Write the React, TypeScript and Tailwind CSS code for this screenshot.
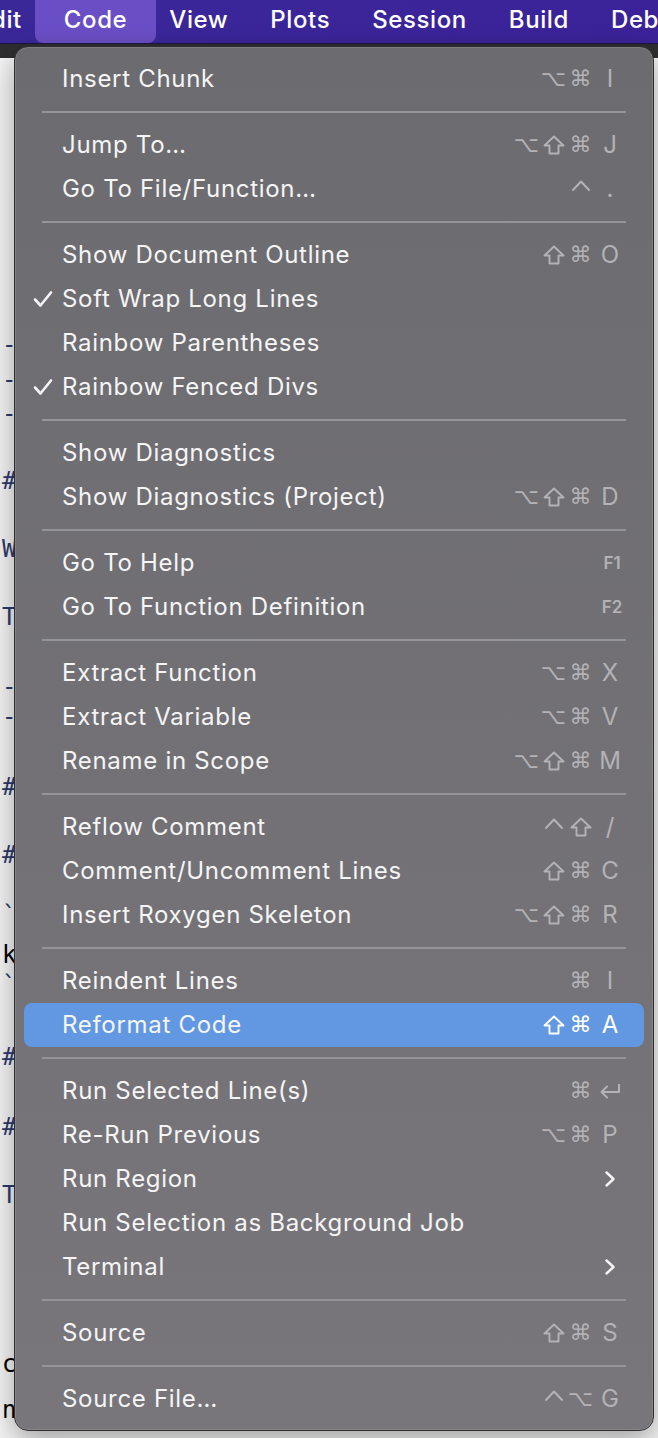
import React from "react";

type Item = {
  label: string;
  mods?: string[];
  key?: string;
  fkey?: string;
  check?: boolean;
  sub?: boolean;
  ret?: boolean;
  active?: boolean;
};

const sections: Item[][] = [
  [{ label: "Insert Chunk", mods: ["opt", "cmd"], key: "I" }],
  [
    { label: "Jump To…", mods: ["opt", "shift", "cmd"], key: "J" },
    { label: "Go To File/Function…", mods: ["ctrl"], key: "." },
  ],
  [
    { label: "Show Document Outline", mods: ["shift", "cmd"], key: "O" },
    { label: "Soft Wrap Long Lines", check: true },
    { label: "Rainbow Parentheses" },
    { label: "Rainbow Fenced Divs", check: true },
  ],
  [
    { label: "Show Diagnostics" },
    { label: "Show Diagnostics (Project)", mods: ["opt", "shift", "cmd"], key: "D" },
  ],
  [
    { label: "Go To Help", fkey: "F1" },
    { label: "Go To Function Definition", fkey: "F2" },
  ],
  [
    { label: "Extract Function", mods: ["opt", "cmd"], key: "X" },
    { label: "Extract Variable", mods: ["opt", "cmd"], key: "V" },
    { label: "Rename in Scope", mods: ["opt", "shift", "cmd"], key: "M" },
  ],
  [
    { label: "Reflow Comment", mods: ["ctrl", "shift"], key: "/" },
    { label: "Comment/Uncomment Lines", mods: ["shift", "cmd"], key: "C" },
    { label: "Insert Roxygen Skeleton", mods: ["opt", "shift", "cmd"], key: "R" },
  ],
  [
    { label: "Reindent Lines", mods: ["cmd"], key: "I" },
    { label: "Reformat Code", mods: ["shift", "cmd"], key: "A", active: true },
  ],
  [
    { label: "Run Selected Line(s)", mods: ["cmd"], ret: true },
    { label: "Re-Run Previous", mods: ["opt", "cmd"], key: "P" },
    { label: "Run Region", sub: true },
    { label: "Run Selection as Background Job" },
    { label: "Terminal", sub: true },
  ],
  [{ label: "Source", mods: ["shift", "cmd"], key: "S" }],
  [{ label: "Source File…", mods: ["ctrl", "opt"], key: "G" }],
];

const Check = () => (
  <svg width="20" height="18" viewBox="0 0 20 18" className="shrink-0">
    <path d="M2 9.5 L7.5 15.5 L18 2.5" fill="none" stroke="#f4f4f5" strokeWidth="2.6" strokeLinecap="round" strokeLinejoin="round" />
  </svg>
);

const Chevron = () => (
  <svg width="12" height="18" viewBox="0 0 12 18">
    <path d="M2.5 2.5 L9.5 9 L2.5 15.5" fill="none" stroke="#f4f4f5" strokeWidth="2.4" strokeLinecap="round" strokeLinejoin="round" />
  </svg>
);

const Return = ({ color }: { color: string }) => (
  <svg width="24" height="18" viewBox="0 0 24 18">
    <path d="M21 2 V10 H4" fill="none" stroke={color} strokeWidth="2" strokeLinejoin="round" />
    <path d="M9 4.5 L3.5 10 L9 15.5" fill="none" stroke={color} strokeWidth="2" strokeLinecap="round" strokeLinejoin="round" />
  </svg>
);

function Mod({ m, color }: { m: string; color: string }) {
  if (m === "shift")
    return (
      <svg width="22" height="20" viewBox="0 0 22 20">
        <path d="M11 1.5 L20.5 10.5 H15.5 V18.5 H6.5 V10.5 H1.5 Z" fill="none" stroke={color} strokeWidth="1.9" strokeLinejoin="round" />
      </svg>
    );
  if (m === "ctrl")
    return (
      <svg width="20" height="20" viewBox="0 0 20 20">
        <path d="M2 11 L10 2.5 L18 11" fill="none" stroke={color} strokeWidth="2" strokeLinecap="round" strokeLinejoin="round" />
      </svg>
    );
  return (
    <span className="text-[22px] leading-none font-['DejaVu_Sans',sans-serif]">{m === "opt" ? "⌥" : "⌘"}</span>
  );
}

function Row({ it }: { it: Item }) {
  const color = it.active ? "#ffffff" : "#b3b2b6";
  return (
    <div
      className={`h-[44px] flex items-center pl-[38px] pr-[18px] rounded-[8px] relative ${
        it.active ? "bg-[#6298e2]" : ""
      }`}
    >
      {it.check && (
        <span className="absolute left-[9px] top-[13px]">
          <Check />
        </span>
      )}
      <span className="flex-1 text-[24px] leading-none text-[#f5f5f6] tracking-[0.7px]">{it.label}</span>
      <div className={`flex items-center ${it.active ? "text-white" : "text-[#b3b2b6]"}`}>
        {it.mods?.map((m, i) => (
          <span key={i} className="w-[27px] flex justify-center items-center">
            <Mod m={m} color={color} />
          </span>
        ))}
        {(it.key || it.fkey || it.sub || it.ret) && (
          <span className="w-[32px] flex justify-center items-center text-[24px] leading-none">
            {it.key}
            {it.fkey && <span className="text-[17px] font-semibold pl-[4px]">{it.fkey}</span>}
            {it.sub && <Chevron />}
            {it.ret && <Return color={color} />}
          </span>
        )}
      </div>
    </div>
  );
}

const editorLines: { h: number; t: string; c?: string }[] = [
  { h: 299, t: "-" },
  { h: 35, t: "-" },
  { h: 34, t: "-" },
  { h: 67, t: "#" },
  { h: 68, t: "W" },
  { h: 68, t: "T" },
  { h: 70, t: "-" },
  { h: 30, t: "-" },
  { h: 70, t: "#" },
  { h: 68, t: "#" },
  { h: 60, t: "`" },
  { h: 40, t: "k", c: "text-black" },
  { h: 30, t: "`" },
  { h: 72, t: "#" },
  { h: 70, t: "#" },
  { h: 68, t: "T" },
  { h: 169, t: "ct", c: "text-black" },
  { h: 46, t: "n", c: "text-black" },
];

export default function App() {
  return (
    <div className="w-[658px] h-[1438px] relative overflow-hidden bg-[#f6f6f7] font-['Inter',sans-serif]">
      {/* menu bar */}
      <div className="h-[44px] bg-gradient-to-r from-[#3a2899] to-[#3b2299] border-b border-[#1d1546] flex items-stretch gap-[42px] text-white text-[24px] font-medium tracking-[0.6px] whitespace-nowrap">
        <span className="-ml-[9px] flex items-center pb-[4px]">dit</span>
        <span className="-mx-[29px] px-[29px] flex items-center pb-[4px] rounded-b-[8px] bg-[#6a4ec6]">Code</span>
        <span className="flex items-center pb-[4px]">View</span>
        <span className="flex items-center pb-[4px]">Plots</span>
        <span className="flex items-center pb-[4px]">Session</span>
        <span className="flex items-center pb-[4px]">Build</span>
        <span className="flex items-center pb-[4px]">Debug</span>
      </div>
      {/* editor behind */}
      <div className="h-[14px] bg-[#2e2e30]" />
      <div className="font-['DejaVu_Sans_Mono',monospace] text-[24px] text-[#2d3a6e] pl-[2px]">
        {editorLines.map((l, i) => (
          <div key={i} style={{ height: l.h }} className={`flex items-end leading-none ${l.c ?? ""}`}>
            {l.t}
          </div>
        ))}
      </div>

      {/* dropdown menu */}
      <div className="absolute left-[14px] top-[46px] w-[640px] rounded-[14px] border border-[#2f2e31] bg-gradient-to-b from-[#6c6b6f] to-[#78767b] shadow-[0_10px_30px_rgba(0,0,0,0.35),inset_0_0_0_1px_rgba(255,255,255,0.12)] px-[9px] pt-[10px] pb-[9px]">
        {sections.map((sec, si) => (
          <React.Fragment key={si}>
            {si > 0 && (
              <div className="h-[22px] flex items-center px-[18px]">
                <div className="h-[2px] w-full bg-[#959498]" />
              </div>
            )}
            {sec.map((it, ii) => (
              <Row key={ii} it={it} />
            ))}
          </React.Fragment>
        ))}
      </div>
    </div>
  );
}
